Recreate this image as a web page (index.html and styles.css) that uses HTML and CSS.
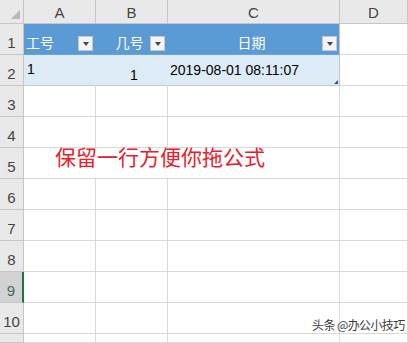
FILE: index.html
```html
<!DOCTYPE html>
<html lang="zh-CN">
<head>
	<meta charset="utf-8" />
	<title>保留一行方便你拖公式</title>
	<link rel="stylesheet" href="styles.css">
</head>
<body>
<div class="sheet">
	<!-- column headers -->
	<div class="corner"><span class="corner-tri"></span></div>
	<div class="colhead">A</div>
	<div class="colhead">B</div>
	<div class="colhead">C</div>
	<div class="colhead">D</div>

	<!-- row 1: table header -->
	<div class="rowhead">1</div>
	<div class="cell th">工号<span class="filter"></span></div>
	<div class="cell th th-center">几号<span class="filter"></span></div>
	<div class="cell th th-center th-last">日期<span class="filter"></span></div>
	<div class="cell"></div>

	<!-- row 2: table data -->
	<div class="rowhead">2</div>
	<div class="cell td td-top">1</div>
	<div class="cell td td-right">1</div>
	<div class="cell td td-date">2019-08-01 08:11:07<span class="resize"></span></div>
	<div class="cell"></div>

	<div class="rowhead">3</div>
	<div class="cell"></div><div class="cell"></div><div class="cell"></div><div class="cell"></div>

	<div class="rowhead">4</div>
	<div class="cell"></div><div class="cell"></div><div class="cell"></div><div class="cell"></div>

	<div class="rowhead">5</div>
	<div class="cell note">保留一行方便你拖公式</div>
	<div class="cell"></div>

	<div class="rowhead">6</div>
	<div class="cell"></div><div class="cell"></div><div class="cell"></div><div class="cell"></div>

	<div class="rowhead">7</div>
	<div class="cell"></div><div class="cell"></div><div class="cell"></div><div class="cell"></div>

	<div class="rowhead">8</div>
	<div class="cell"></div><div class="cell"></div><div class="cell"></div><div class="cell"></div>

	<div class="rowhead selected">9</div>
	<div class="cell"></div><div class="cell"></div><div class="cell"></div><div class="cell"></div>

	<div class="rowhead">10</div>
	<div class="cell"></div><div class="cell"></div><div class="cell"></div><div class="cell"></div>

	<div class="rowhead"></div>
	<div class="cell"></div><div class="cell"></div><div class="cell"></div><div class="cell"></div>

	<div class="watermark">头条 @办公小技巧</div>
</div>
</body>
</html>
```
FILE: styles.css
```css
*{
	box-sizing: border-box;
}

body{
	margin: 0;
	overflow: hidden;
	background: #fff;
	font-family: "Liberation Sans", "Noto Sans CJK SC", sans-serif;
}

.sheet{
	position: relative;
	width: 408px;
	height: 343px;
	display: grid;
	grid-template-columns: 24px 72px 72px 172px 1fr;
	grid-template-rows: 24px repeat(10, 31px) 1fr;
}

/* headers */
.corner,
.colhead,
.rowhead{
	background: #e9e9e9;
	color: #444;
	border-right: 1px solid #c6c6c6;
	border-bottom: 1px solid #c6c6c6;
}

.corner{
	position: relative;
}

.corner-tri{
	position: absolute;
	right: 3px;
	bottom: 4px;
	width: 0;
	height: 0;
	border-left: 9px solid transparent;
	border-bottom: 9px solid #b8b8b8;
}

.colhead{
	display: flex;
	align-items: center;
	justify-content: center;
	font-size: 15px;
	padding-top: 1px;
}

.rowhead{
	display: flex;
	align-items: flex-end;
	justify-content: center;
	font-size: 15px;
	padding-bottom: 3px;
}

.rowhead.selected{
	background: #d2d2d2;
	color: #3f6e55;
	border-right: 2px solid #217346;
}

/* cells */
.cell{
	border-right: 1px solid #d9d9d9;
	border-bottom: 1px solid #d9d9d9;
	font-size: 14px;
	color: #000;
	white-space: nowrap;
}

.th{
	background: #5b9bd5;
	border-right-color: #5b9bd5;
	border-bottom-color: #6aa5db;
	color: #fff;
	font-family: "Noto Sans CJK SC", sans-serif;
	font-size: 14px;
	display: flex;
	align-items: flex-end;
	padding: 0 3px 2px 2px;
	position: relative;
}

.th-last{
	border-right-color: #c3c3c3;
}

.th-center{
	justify-content: center;
	padding-right: 6px;
}

.filter{
	position: absolute;
	right: 2px;
	bottom: 3px;
	width: 15px;
	height: 15px;
	background: #f4f4f4;
	border: 1px solid #c8c8c8;
}

.filter::after{
	content: "";
	position: absolute;
	left: 4px;
	top: 5px;
	border-left: 3px solid transparent;
	border-right: 3px solid transparent;
	border-top: 4px solid #444;
}

.td{
	background: #ddebf7;
	border-right-color: #ddebf7;
	border-bottom-color: #c8c8c8;
	display: flex;
	padding: 0 3px;
}

.td-top{
	align-items: flex-start;
	padding-top: 6px;
}

.td-right{
	align-items: flex-end;
	padding-left: 34px;
	padding-bottom: 2px;
}

.td-date{
	align-items: center;
	padding-left: 2px;
	position: relative;
	border-right-color: #c3c3c3;
}

.resize{
	position: absolute;
	right: 1px;
	bottom: 1px;
	border-left: 4px solid transparent;
	border-bottom: 4px solid #2f4f8f;
}

.note{
	grid-column: 2 / 5;
	color: #e8202a;
	font-family: "Noto Sans CJK SC", sans-serif;
	font-size: 21px;
	line-height: 21px;
	padding-left: 31px;
	margin-top: -2px;
	border-right-color: #d9d9d9;
}

.watermark{
	position: absolute;
	left: 312px;
	top: 318px;
	white-space: nowrap;
	font-family: "Noto Sans CJK SC", sans-serif;
	font-size: 12px;
	line-height: 14px;
	color: #3a3a3a;
	text-shadow: 0 0 2px #fff, 0 0 1px #fff;
	letter-spacing: -0.6px;
}
```
